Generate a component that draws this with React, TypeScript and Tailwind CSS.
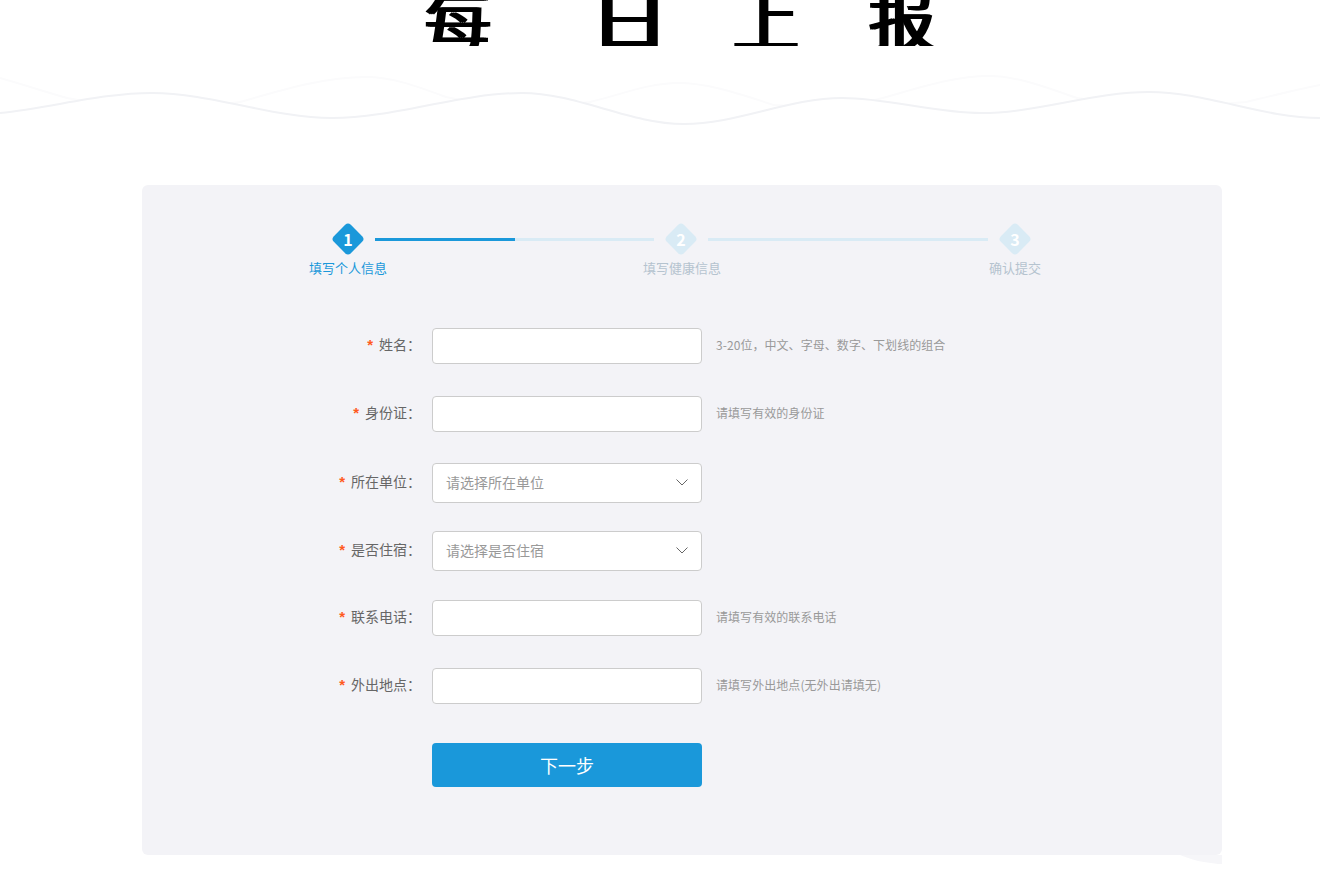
import React from 'react';

const FONT = '"Noto Sans CJK SC", "Liberation Sans", sans-serif';

// 表单项
const rows = [
  { label: '姓名', hint: '3-20位，中文、字母、数字、下划线的组合', mt: 'mt-0' },
  { label: '身份证', hint: '请填写有效的身份证', mt: 'mt-[32px]' },
  { label: '所在单位', select: '请选择所在单位', mt: 'mt-[31px]' },
  { label: '是否住宿', select: '请选择是否住宿', mt: 'mt-[28px]' },
  { label: '联系电话', hint: '请填写有效的联系电话', mt: 'mt-[29px]' },
  { label: '外出地点', hint: '请填写外出地点(无外出请填无)', mt: 'mt-[32px]' },
];

function Diamond({ n, active }: { n: number; active?: boolean }) {
  return (
    <div className="grid w-[32px] h-[32px] shrink-0 place-items-center">
      <div
        className={`[grid-area:1/1] w-[24px] h-[24px] rotate-45 rounded-[4px] ${active ? 'bg-[#1a98da]' : 'bg-[#d9ebf5]'}`}
      />
      <span className="[grid-area:1/1] relative text-[16px] font-bold leading-none text-white">{n}</span>
    </div>
  );
}

function FormRow({ label, hint, select, mt }: { label: string; hint?: string; select?: string; mt: string }) {
  return (
    <div className={`flex items-center ${mt}`}>
      <div className="w-[272px] shrink-0 pb-[2px] pr-[11px] text-right text-[14px] text-[#666]">
        <span className="mr-[6px] font-['Liberation_Sans'] text-[15px] font-bold text-[#ff5a1f]">*</span>
        {label}：
      </div>
      {select ? (
        <div className="flex h-[40px] w-[270px] items-center justify-between rounded-[4px] border border-[#ccc] bg-white pb-[2px] pl-[13px] pr-[13px] text-[14px] text-[#999]">
          <span>{select}</span>
          <svg width="12" height="7" viewBox="0 0 12 7" fill="none">
            <path d="M0.5 0.5 L6 6 L11.5 0.5" stroke="#666" strokeWidth="1" />
          </svg>
        </div>
      ) : (
        <input className="h-[36px] w-[270px] rounded-[4px] border border-[#ccc] bg-white outline-none" />
      )}
      {hint && <span className="mb-[2px] ml-[14px] text-[12px] tracking-[0.06px] text-[#999]">{hint}</span>}
    </div>
  );
}

export default function App() {
  return (
    <div className="min-h-[893px] h-[893px] overflow-hidden bg-white" style={{ fontFamily: FONT }}>
      {/* 标题 */}
      <div className="h-[75px] overflow-hidden">
        <div className="flex h-[46px] items-end overflow-hidden pl-[423px] text-[66px] font-normal leading-none text-black [text-shadow:2px_0_0_#000,4px_0_0_#000]">
          <span className="w-[177px] shrink-0 translate-y-[3px]">每</span>
          <span className="w-[131px] shrink-0 translate-y-[3px] scale-x-[1.18]">日</span>
          <span className="w-[136px] shrink-0 translate-y-[3px]">上</span>
          <span className="w-[66px] shrink-0 translate-y-[3px]">报</span>
        </div>
      </div>

      {/* 波浪 */}
      <svg className="block" width="1320" height="60" viewBox="0 75 1320 60" fill="none">
        <path
          d="M0 78 C25 85 42 91 67 98 C125 110 182 110 240 102 C282 90 324 77 366 77 C393 77 419 87 446 97 C494 108 542 108 590 102 C620 95 648 83 678 83 C710 83 742 95 774 105 C808 108 841 106 875 100 C913 90 951 76 989 76 C1018 76 1048 88 1077 98 C1133 107 1190 107 1246 102 C1271 96 1295 90 1320 85"
          stroke="#fbfbfc"
          strokeWidth="2"
        />
        <path
          d="M0 113 C51 108 101 93 152 93 C212 93 272 118 332 118 C395 118 459 93 522 93 C576 93 630 124 684 124 C737 124 789 98 842 98 C888 98 935 113 981 113 C1037 113 1093 92 1149 92 C1206 92 1263 118 1320 118 L1320 135 L0 135 Z"
          fill="#ffffff"
        />
        <path
          d="M0 113 C51 108 101 93 152 93 C212 93 272 118 332 118 C395 118 459 93 522 93 C576 93 630 124 684 124 C737 124 789 98 842 98 C888 98 935 113 981 113 C1037 113 1093 92 1149 92 C1206 92 1263 118 1320 118"
          stroke="#f1f2f5"
          strokeWidth="2"
        />
      </svg>

      {/* 主面板 */}
      <div className="relative ml-[142px] mt-[50px] h-[670px] w-[1080px] rounded-[6px] bg-[#f3f3f7]">
        <div className="pt-[38px]">
          <div className="flex items-center pl-[190px]">
            <Diamond n={1} active />
            <div className="ml-[11px] flex h-[3px] w-[279px] bg-[#d9ebf5]">
              <div className="h-full w-[140px] bg-[#1a98da]" />
            </div>
            <div className="ml-[11px]">
              <Diamond n={2} />
            </div>
            <div className="ml-[11px] h-[3px] w-[280px] bg-[#d9ebf5]" />
            <div className="ml-[11px]">
              <Diamond n={3} />
            </div>
          </div>
          <div className="mt-[3px] flex pl-[167px] text-[13px] leading-[20px]">
            <div className="w-[78px] shrink-0 text-center text-[#1a98da]">填写个人信息</div>
            <div className="ml-[256px] w-[78px] shrink-0 text-center text-[#b5c3cf]">填写健康信息</div>
            <div className="ml-[255px] w-[78px] shrink-0 text-center text-[#b5c3cf]">确认提交</div>
          </div>
        </div>

        {/* 表单 */}
        <div className="mt-[50px] ml-[18px]">
          {rows.map((r) => (
            <FormRow key={r.label} {...r} />
          ))}
          <button className="ml-[272px] mt-[39px] block h-[44px] w-[270px] rounded-[4px] bg-[#1a98da] text-[18px] text-white">
            下一步
          </button>
        </div>

        {/* 右下角的波浪残影 */}
        <svg className="absolute right-0 top-[664px]" width="42" height="16" viewBox="0 0 42 16">
          <path d="M0 6 H42 V15 H38 C34 14 28 14 24 13 C16 12 8 9 0 6 Z" fill="#f6f6f9" />
        </svg>
      </div>
    </div>
  );
}
